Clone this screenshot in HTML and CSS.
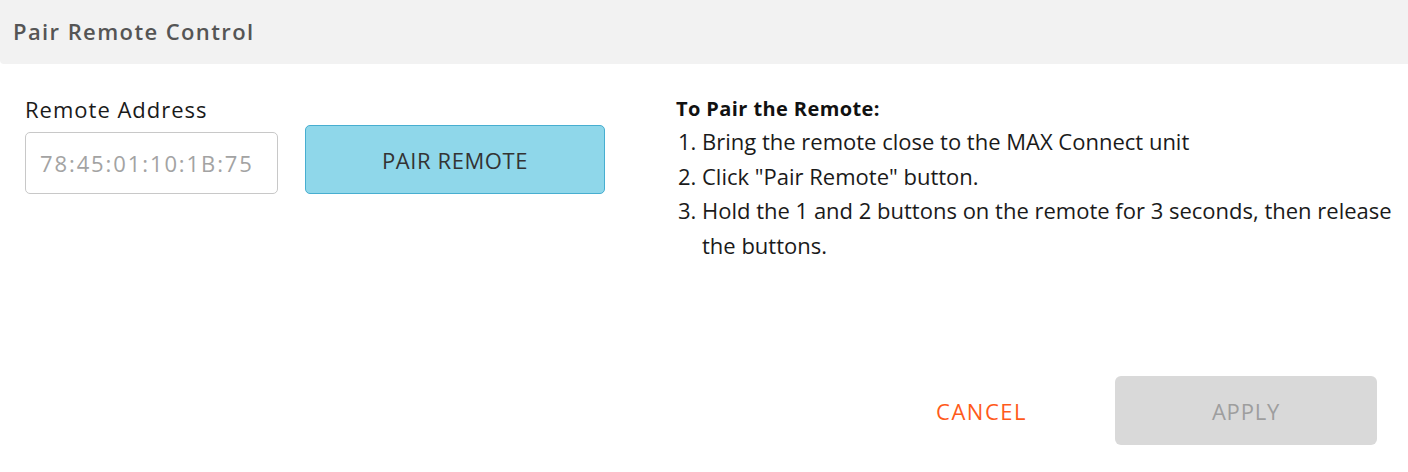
FILE: index.html
```html
<!DOCTYPE html>
<html lang="en">
<head>
<meta charset="utf-8">
<title>Pair Remote Control</title>
<link rel="stylesheet" href="styles.css">
</head>
<body>
<div class="dialog">
  <header class="dialog-header">Pair Remote Control</header>
  <main class="dialog-body">
    <section class="pair-form">
      <label class="field-label" for="addr">Remote Address</label>
      <div class="form-row">
        <input id="addr" class="text-input" type="text" placeholder="78:45:01:10:1B:75">
        <button class="btn-pair" type="button">PAIR REMOTE</button>
      </div>
    </section>
    <section class="instructions">
      <h2 class="instr-title">To Pair the Remote:</h2>
      <ol class="instr-list">
        <li>Bring the remote close to the MAX Connect unit</li>
        <li>Click "Pair Remote" button.</li>
        <li>Hold the 1 and 2 buttons on the remote for 3 seconds, then release the buttons.</li>
      </ol>
    </section>
  </main>
  <footer class="dialog-footer">
    <button class="btn-cancel" type="button">CANCEL</button>
    <button class="btn-apply" type="button" disabled>APPLY</button>
  </footer>
</div>
</body>
</html>
```
FILE: styles.css
```css
* { box-sizing: border-box; }
html, body { margin: 0; padding: 0; background: #fff; }
body {
  font-family: "Open Sans", "Liberation Sans", sans-serif;
  color: #1a1a1a;
  width: 1408px;
  height: 472px;
  overflow: hidden;
}
.dialog {
  display: flex;
  flex-direction: column;
  height: 472px;
}
.dialog-header {
  height: 64px;
  background: #f2f2f2;
  border-radius: 0 0 0 4px;
  padding: 0 0 3px 13px;
  display: flex;
  align-items: center;
  font-weight: 600;
  font-size: 22px;
  letter-spacing: 1.4px;
  color: #555;
}
.dialog-body {
  flex: 1;
  display: flex;
  padding: 33px 0 0 25px;
}
.pair-form {
  display: flex;
  flex-direction: column;
  width: 580px;
}
.field-label {
  font-size: 22px;
  line-height: 24px;
  height: 24px;
  margin-bottom: 4px;
  letter-spacing: 1px;
  color: #1a1a1a;
}
.form-row {
  display: flex;
  align-items: flex-end;
  gap: 27px;
}
.text-input {
  width: 253px;
  height: 62px;
  border: 1px solid #c8c8c8;
  border-radius: 5px;
  padding: 0 14px;
  font-family: inherit;
  font-size: 22px;
  letter-spacing: 1.9px;
  color: #333;
  outline: none;
}
.text-input::placeholder { color: #a3a3a3; }
.btn-pair {
  width: 300px;
  height: 69px;
  background: #8fd7ea;
  border: 1px solid #47aed0;
  border-radius: 5px;
  font-family: inherit;
  font-size: 22px;
  letter-spacing: 0.6px;
  color: #333;
  cursor: pointer;
}
.instructions {
  margin-left: 71px;
}
.instr-title {
  margin: 0;
  font-size: 20px;
  font-weight: 700;
  line-height: 24px;
  letter-spacing: 0.4px;
  color: #111;
}
.instr-list {
  margin: 3px 0 0;
  padding-left: 26px;
  font-size: 22px;
  line-height: 34.5px;
  width: 724px;
}
.dialog-footer {
  display: flex;
  justify-content: flex-end;
  align-items: center;
  padding: 0 31px 27px 0;
  gap: 44px;
}
.btn-cancel {
  background: none;
  border: none;
  font-family: inherit;
  font-size: 22px;
  letter-spacing: 1.5px;
  color: #ff5a1a;
  padding: 0 44px;
  height: 69px;
  cursor: pointer;
}
.btn-apply {
  width: 262px;
  height: 69px;
  background: #d9d9d9;
  border: none;
  border-radius: 6px;
  font-family: inherit;
  font-size: 22px;
  letter-spacing: 0.8px;
  color: #9e9e9e;
}
```
